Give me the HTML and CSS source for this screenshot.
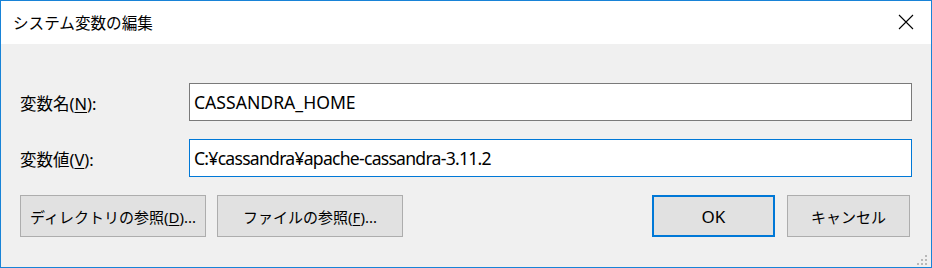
FILE: index.html
```html
<!DOCTYPE html>
<html lang="ja">
<head>
    <meta charset="UTF-8">
    <title>システム変数の編集</title>
    <link rel="stylesheet" href="styles.css">
</head>
<body>
    <div class="window">
        <div class="titlebar">
            <span class="title">システム変数の編集</span>
            <span class="close">
                <svg width="16" height="16" viewBox="0 0 16 16"><path d="M1 1 L15 15 M15 1 L1 15" stroke="#000" stroke-width="1.1" fill="none"/></svg>
            </span>
        </div>
        <div class="content">
            <div class="field">
                <label>変数名(<u>N</u>):</label>
                <div class="input">CASSANDRA_HOME</div>
            </div>
            <div class="field">
                <label>変数値(<u>V</u>):</label>
                <div class="input focused">C:¥cassandra¥apache-cassandra-3.11.2</div>
            </div>
            <div class="buttons">
                <button class="btn wide">ディレクトリの参照(<u>D</u>)...</button>
                <button class="btn wide">ファイルの参照(<u>F</u>)...</button>
                <span class="spacer"></span>
                <button class="btn default">OK</button>
                <button class="btn">キャンセル</button>
            </div>
        </div>
        <div class="grip">
            <svg width="12" height="12" viewBox="0 0 12 12" fill="#b8b8b8">
                <rect x="8" y="0" width="2" height="2"/>
                <rect x="4" y="4" width="2" height="2"/><rect x="8" y="4" width="2" height="2"/>
                <rect x="0" y="8" width="2" height="2"/><rect x="4" y="8" width="2" height="2"/><rect x="8" y="8" width="2" height="2"/>
            </svg>
        </div>
    </div>
</body>
</html>
```
FILE: styles.css
```css
body {
    margin: 0;
    font-family: "Noto Sans", "Noto Sans CJK JP", sans-serif;
    color: #000;
}

.window {
    position: relative;
    width: 932px;
    height: 268px;
    box-sizing: border-box;
    border: 1px solid #1883d7;
    background: #f0f0f0;
}

.titlebar {
    height: 43px;
    background: #fff;
    display: flex;
    align-items: center;
    justify-content: space-between;
    padding: 0 17px 0 12px;
}
.title {
    font-size: 15.6px;
    font-family: "Noto Sans CJK JP", sans-serif;
    margin-top: -2px;
}
.close {
    display: flex;
    margin-top: -2px;
}

.content {
    padding: 39px 19px 0 19px;
}
.field {
    display: flex;
    align-items: center;
    margin-bottom: 18px;
}
.field label {
    width: 169px;
    font-size: 16.5px;
    font-family: "Noto Sans", "Noto Sans CJK JP", sans-serif;
    padding-top: 2px;
}
.field u, .btn u {
    text-underline-offset: 2px;
}
.input {
    width: 723px;
    height: 38px;
    box-sizing: border-box;
    border: 1px solid #7a7a7a;
    background: #fff;
    font-size: 17.6px;
    line-height: 36px;
    padding-left: 4px;
}
.input.focused {
    border-color: #0078d7;
    letter-spacing: -0.75px;
}

.buttons {
    display: flex;
    margin-top: 7px;
    padding-right: 2px;
}
.spacer { flex: 1; }
.btn {
    height: 42px;
    width: 123px;
    background: #e1e1e1;
    border: 1px solid #adadad;
    font-family: "Noto Sans", "Noto Sans CJK JP", sans-serif;
    font-size: 15px;
    color: #000;
    padding: 0;
    margin-left: 12px;
}
.btn.wide {
    width: 186px;
    margin: 0 11px 0 0;
}
.btn.default {
    border: 2px solid #0078d7;
    font-size: 17px;
}

.grip {
    position: absolute;
    right: 2px;
    bottom: 0px;
    display: flex;
}
```
